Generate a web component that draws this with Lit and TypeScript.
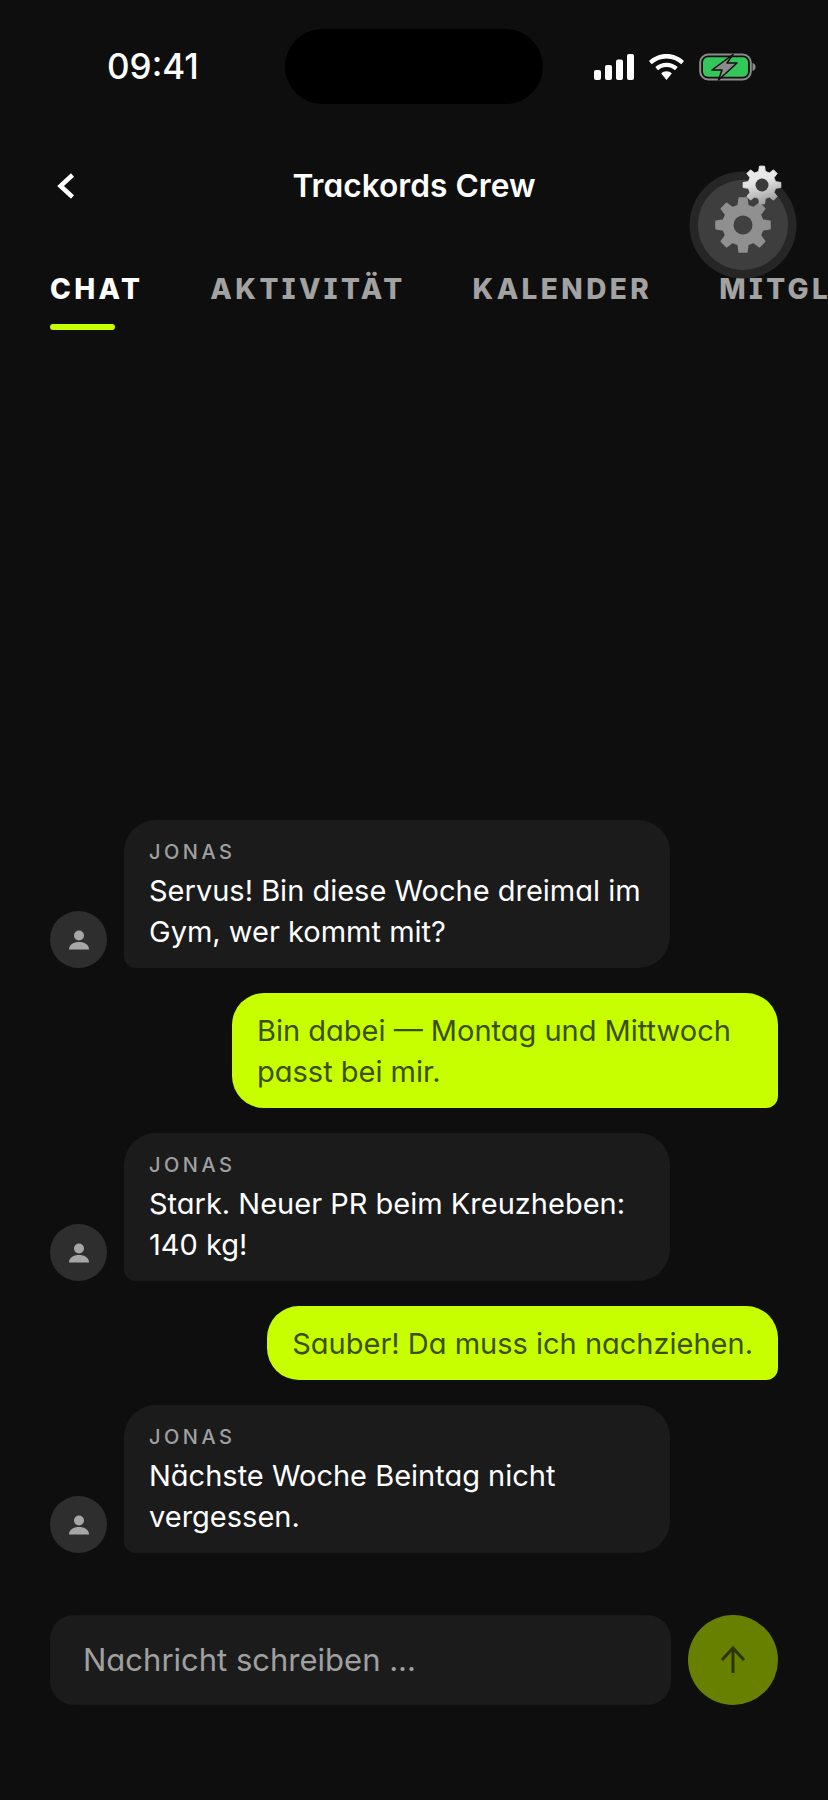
import { LitElement, html, css, svg } from 'lit';
import { customElement } from 'lit/decorators.js';

type Msg = { me: boolean; text: string };

const MESSAGES: Msg[] = [
  { me: false, text: 'Servus! Bin diese Woche dreimal im Gym, wer kommt mit?' },
  { me: true, text: 'Bin dabei — Montag und Mittwoch passt bei mir.' },
  { me: false, text: 'Stark. Neuer PR beim Kreuzheben: 140 kg!' },
  { me: true, text: 'Sauber! Da muss ich nachziehen.' },
  { me: false, text: 'Nächste Woche Beintag nicht vergessen.' },
];

const TABS = ['CHAT', 'AKTIVITÄT', 'KALENDER', 'MITGLIEDER'];

// builds a toothed wheel outline around 0,0
function gearPath(outer: number, root: number, teeth: number) {
  const step = (Math.PI * 2) / teeth;
  const pts: string[] = [];
  for (let i = 0; i < teeth; i++) {
    const a = i * step - Math.PI / 2;
    const corners: [number, number][] = [
      [root, a - step * 0.3],
      [outer, a - step * 0.17],
      [outer, a + step * 0.17],
      [root, a + step * 0.3],
    ];
    for (const [r, t] of corners) {
      pts.push(`${(r * Math.cos(t)).toFixed(2)} ${(r * Math.sin(t)).toFixed(2)}`);
    }
  }
  return `M${pts.join('L')}Z`;
}

@customElement('app-root')
export class AppRoot extends LitElement {
  static styles = css`
    :host {
      display: block;
      font-family: Inter, 'Noto Sans', sans-serif;
      font-feature-settings: 'cv11', 'cv08';
    }
    .screen {
      position: relative;
      width: 828px;
      height: 1800px;
      overflow: hidden;
      background: #0e0e0f;
      color: #fff;
      display: flex;
      flex-direction: column;
    }
    .status {
      height: 133px;
      flex: none;
      box-sizing: border-box;
      padding: 29px 0 0 107px;
      display: flex;
    }
    .time {
      font-size: 35px;
      font-weight: 500;
      line-height: 75px;
      font-feature-settings: normal;
      width: 178px;
    }
    .island {
      width: 258px;
      height: 75px;
      border-radius: 38px;
      background: #000;
    }
    .sys {
      display: flex;
      align-items: center;
      gap: 15px;
      height: 75px;
      margin-left: 51px;
    }
    .sys svg {
      display: block;
      flex: none;
    }
    .head {
      flex: none;
      height: 106px;
      display: flex;
      align-items: center;
      justify-content: center;
      position: relative;
    }
    .back {
      position: absolute;
      left: 57px;
      top: 40px;
    }
    .title {
      font-size: 31.7px;
      font-weight: 600;
      margin-top: -1px;
    }
    .tabs {
      flex: none;
      display: flex;
      gap: 67px;
      padding: 0 0 0 50px;
      white-space: nowrap;
      margin-top: 30px;
    }
    .tab {
      font-size: 28px;
      font-weight: 800;
      letter-spacing: 3.4px;
      color: #a2a2a2;
      line-height: 40px;
      height: 40px;
      position: relative;
    }
    .tab.on {
      color: #fff;
    }
    .tab.on::after {
      content: '';
      position: absolute;
      left: 0;
      top: 55px;
      width: 65px;
      height: 6px;
      border-radius: 3px;
      background: #c8ff00;
    }
    .thread {
      flex: 1;
      display: flex;
      flex-direction: column;
      justify-content: flex-end;
      gap: 25px;
      padding: 0 50px;
    }
    .row {
      display: flex;
      align-items: flex-end;
      gap: 17px;
    }
    .row.me {
      justify-content: flex-end;
    }
    .avatar {
      width: 57px;
      height: 57px;
      flex: none;
      border-radius: 50%;
      background: #2e2e2e;
      display: flex;
      align-items: center;
      justify-content: center;
    }
    .bubble {
      width: 546px;
      box-sizing: border-box;
      padding: 16px 25px;
      background: #1b1b1c;
      border-radius: 32px 32px 32px 12px;
      font-size: 29px;
      line-height: 41px;
    }
    .me .bubble {
      width: fit-content;
      max-width: 546px;
      padding: 16.5px 25px;
      background: #c8ff00;
      color: #3b4f00;
      border-radius: 32px 32px 12px 32px;
    }
    .name {
      font-size: 20px;
      font-weight: 500;
      line-height: 32px;
      letter-spacing: 3.5px;
      color: #a0a0a0;
      margin-bottom: 2px;
    }
    .composer {
      flex: none;
      display: flex;
      gap: 17px;
      padding: 62px 50px 95px 50px;
    }
    .field {
      flex: 1;
      height: 90px;
      box-sizing: border-box;
      padding-left: 33px;
      border-radius: 24px;
      background: #1b1b1c;
      color: #a0a0a0;
      font-size: 31px;
      line-height: 90px;
    }
    .send {
      width: 90px;
      height: 90px;
      flex: none;
      border-radius: 50%;
      background: #688000;
      display: flex;
      align-items: center;
      justify-content: center;
    }
    .gears {
      position: absolute;
      left: 680px;
      top: 160px;
      display: block;
    }
  `;

  private _signal() {
    return html`<svg width="40" height="26" viewBox="0 0 40 26" fill="#fff">
      <rect x="0" y="16" width="7" height="10" rx="2"></rect>
      <rect x="11" y="11" width="7" height="15" rx="2"></rect>
      <rect x="22" y="5.500" width="7" height="20.500" rx="2"></rect>
      <rect x="33" y="0" width="7" height="26" rx="2"></rect>
    </svg>`;
  }

  private _wifi() {
    return html`<svg width="35" height="26" viewBox="0 0 35 26" fill="#fff">
      <path d="M17.500 0C24.500 0 30.500 2.700 35 7L32.300 10.200C28.500 6.600 23.300 4.400 17.500 4.400C11.700 4.400 6.500 6.600 2.700 10.200L0 7C4.500 2.700 10.500 0 17.500 0Z"></path>
      <path d="M17.500 8.700C21.900 8.700 25.800 10.400 28.700 13.100L26 16.300C23.800 14.200 20.800 13 17.500 13C14.200 13 11.200 14.200 9 16.300L6.300 13.100C9.200 10.400 13.100 8.700 17.500 8.700Z"></path>
      <path d="M17.500 17.300C19.600 17.300 21.500 18.100 22.800 19.400L17.500 26L12.200 19.400C13.500 18.100 15.400 17.300 17.500 17.300Z"></path>
    </svg>`;
  }

  private _battery() {
    return html`<svg width="57" height="28" viewBox="0 0 57 28">
      <rect x="1.200" y="1.500" width="50.600" height="25" rx="8" fill="none" stroke="#8c8c8c" stroke-width="2"></rect>
      <rect x="4" y="4.300" width="45" height="19.400" rx="5" fill="#34c759"></rect>
      <path d="M53.500 10C55.500 10.500 56.500 12 56.500 14C56.500 16 55.500 17.500 53.500 18Z" fill="#8c8c8c"></path>
      <path d="M34 1.500L13 17H23L19.500 27L38 10H28Z" fill="#8c8c8c" stroke="#0e0e0f" stroke-width="1.500" stroke-linejoin="round"></path>
    </svg>`;
  }

  private _gears() {
    return html`<svg class="gears" width="120" height="125" viewBox="0 0 120 125">
      <defs>
        <linearGradient id="chrome" x1="0" y1="0" x2="0.300" y2="1">
          <stop offset="0" stop-color="#f0f0f0"></stop>
          <stop offset="0.500" stop-color="#e4e4e4"></stop>
          <stop offset="1" stop-color="#a8a8a8"></stop>
        </linearGradient>
      </defs>
      <circle cx="63" cy="65" r="53.500" fill="#262626"></circle>
      <circle cx="63" cy="65" r="45" fill="#3e3e3e"></circle>
      <path transform="translate(63 65)" d=${gearPath(27, 20, 8)} fill="#909090" stroke="#909090" stroke-width="2" stroke-linejoin="round"></path>
      <circle cx="63" cy="65" r="9.500" fill="#404040"></circle>
      ${svg`<path transform="translate(82 25)" d=${gearPath(19, 14, 8)} fill="url(#chrome)" stroke="url(#chrome)" stroke-width="1" stroke-linejoin="round"></path>`}
      <circle cx="82" cy="25" r="6.500" fill="#3a3a3a"></circle>
    </svg>`;
  }

  private _message(m: Msg) {
    if (m.me) {
      return html`<div class="row me"><div class="bubble">${m.text}</div></div>`;
    }
    return html`<div class="row">
      <div class="avatar">
        <svg width="20" height="20" viewBox="0 0 20 20" fill="#a6a6a6">
          <circle cx="10" cy="5.500" r="5"></circle>
          <path d="M0 19.500C0 14.500 4.500 12 10 12C15.500 12 20 14.500 20 19.500Z"></path>
        </svg>
      </div>
      <div class="bubble">
        <div class="name">JONAS</div>
        ${m.text}
      </div>
    </div>`;
  }

  render() {
    return html`<div class="screen">
      <div class="status">
        <div class="time">09:41</div>
        <div class="island"></div>
        <div class="sys">${this._signal()}${this._wifi()}${this._battery()}</div>
      </div>
      <div class="head">
        <svg class="back" width="18" height="26" viewBox="0 0 18 26" fill="none" stroke="#fff" stroke-width="4.500">
          <path d="M15.500 2L3.500 13L15.500 24"></path>
        </svg>
        <div class="title">Trackords Crew</div>
      </div>
      <div class="tabs">
        ${TABS.map((t, i) => html`<div class="tab ${i === 0 ? 'on' : ''}">${t}</div>`)}
      </div>
      <div class="thread">${MESSAGES.map((m) => this._message(m))}</div>
      <div class="composer">
        <div class="field">Nachricht schreiben ...</div>
        <div class="send">
          <svg width="30" height="30" viewBox="0 0 30 30" fill="none" stroke="#2b3600" stroke-width="3">
            <path d="M15 28V3M4 15L15 3L26 15"></path>
          </svg>
        </div>
      </div>
      ${this._gears()}
    </div>`;
  }
}
